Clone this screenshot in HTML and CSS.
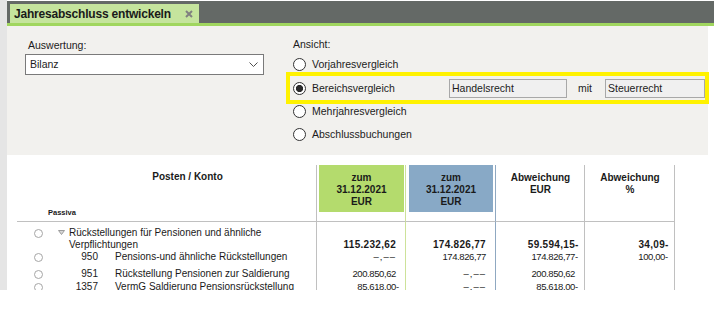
FILE: index.html
```html
<!DOCTYPE html>
<html lang="de">

<head>
    <meta charset="UTF-8">
    <meta name="viewport" content="width=device-width, initial-scale=1.0">
    <title>Jahresabschluss entwickeln</title>
<link rel="stylesheet" href="styles.css">
</head>

<body>
  <div class="window">
    <div class="sidebar"></div>
    <div class="main">

      <div class="tabbar">
        <div class="tab">
          <span>Jahresabschluss entwickeln</span>
          <svg class="tab-close" width="8" height="8" viewBox="0 0 8 8">
            <path d="M1 1L7 7M7 1L1 7" stroke="#808080" stroke-width="2" />
          </svg>
        </div>
      </div>

      <div class="settings">
        <div class="settings-left">
          <div class="field-label">Auswertung:</div>
          <div class="select">
            <span>Bilanz</span>
            <svg width="9" height="5" viewBox="0 0 9 5">
              <path d="M0.5 0.5L4.5 4.5L8.5 0.5" fill="none" stroke="#505050" stroke-width="1" />
            </svg>
          </div>
        </div>

        <div class="settings-right">
          <div class="field-label">Ansicht:</div>
          <div class="option"><span class="radio"></span>Vorjahresvergleich</div>
          <div class="option option-active">
            <span class="radio checked"></span>
            <span class="option-label">Bereichsvergleich</span>
            <span class="textbox">Handelsrecht</span>
            <span class="mit">mit</span>
            <span class="textbox textbox-short">Steuerrecht</span>
          </div>
          <div class="option"><span class="radio"></span>Mehrjahresvergleich</div>
          <div class="option"><span class="radio"></span>Abschlussbuchungen</div>
        </div>
      </div>

      <div class="report">
        <div class="grid">
          <!-- header -->
          <div class="head head-posten">
            <div class="head-title">Posten / Konto</div>
            <div class="head-side">Passiva</div>
          </div>
          <div class="head col-current"><div class="head-fill fill-green">zum<br>31.12.2021<br>EUR</div></div>
          <div class="head col-compare"><div class="head-fill fill-blue">zum<br>31.12.2021<br>EUR</div></div>
          <div class="head col-diff"><div class="head-fill">Abweichung<br>EUR</div></div>
          <div class="head col-pct"><div class="head-fill">Abweichung<br>%</div></div>

          <!-- group row -->
          <div class="cell posten is-group">
            <span class="row-radio"></span>
            <svg class="twisty" width="7" height="5" viewBox="0 0 7 5">
              <path d="M0.5 0.5H6.5L3.5 4.5Z" fill="#d6d6d6" stroke="#9c9c9c" stroke-width="1" />
            </svg>
            <span class="group-label">Rückstellungen für Pensionen und ähnliche Verpflichtungen</span>
          </div>
          <div class="cell num strong col-current is-group">115.232,62<span class="sign"></span></div>
          <div class="cell num strong col-compare is-group">174.826,77<span class="sign"></span></div>
          <div class="cell num strong col-diff is-group">59.594,15<span class="sign">-</span></div>
          <div class="cell num strong col-pct is-group">34,09<span class="sign">-</span></div>

          <!-- accounts -->
          <div class="cell posten">
            <span class="row-radio"></span>
            <span class="acct-num">950</span>
            <span class="acct-name">Pensions-und ähnliche Rückstellungen</span>
          </div>
          <div class="cell num col-current"><span class="empty">–,––</span><span class="sign"></span></div>
          <div class="cell num col-compare">174.826,77<span class="sign"></span></div>
          <div class="cell num col-diff">174.826,77<span class="sign">-</span></div>
          <div class="cell num col-pct">100,00<span class="sign">-</span></div>

          <div class="cell posten">
            <span class="row-radio"></span>
            <span class="acct-num">951</span>
            <span class="acct-name">Rückstellung Pensionen zur Saldierung</span>
          </div>
          <div class="cell num col-current">200.850,62<span class="sign"></span></div>
          <div class="cell num col-compare"><span class="empty">–,––</span><span class="sign"></span></div>
          <div class="cell num col-diff">200.850,62<span class="sign"></span></div>
          <div class="cell num col-pct"></div>

          <div class="cell posten">
            <span class="row-radio"></span>
            <span class="acct-num">1357</span>
            <span class="acct-name">VermG Saldierung Pensionsrückstellung</span>
          </div>
          <div class="cell num col-current">85.618,00<span class="sign">-</span></div>
          <div class="cell num col-compare"><span class="empty">–,––</span><span class="sign"></span></div>
          <div class="cell num col-diff">85.618,00<span class="sign">-</span></div>
          <div class="cell num col-pct"></div>
        </div>
      </div>

    </div>
  </div>
</body>

</html>
```

FILE: styles.css
```css
body {
  margin: 0;
  background: #fff;
}

.window {
  display: flex;
  width: 714px;
  height: 290px;
  overflow: hidden;
  font-family: "Liberation Sans", Arial, sans-serif;
  color: #1c1c1c;
}

.sidebar {
  width: 7px;
  flex: none;
  background: #e5e5e5;
}

.main {
  flex: 1;
  min-width: 0;
}

/* tab strip */
.tabbar {
  display: flex;
  align-items: flex-end;
  height: 22px;
  margin-top: 1px;
  padding-left: 3px;
  background: #646966;
  border-bottom: 3px solid #a0d65e;
}

.tab {
  display: flex;
  align-items: center;
  justify-content: space-between;
  width: 189px;
  height: 19px;
  box-sizing: border-box;
  padding: 0 6px 0 4px;
  background: #c5e49d;
  font-size: 12px;
  font-weight: bold;
  letter-spacing: -0.2px;
  color: #1a1a1a;
}

/* settings panel */
.settings {
  display: flex;
  height: 129px;
  margin-right: 6px;
  padding-left: 18px;
  box-sizing: border-box;
  background: #f2f1ee;
  font-size: 10.5px;
  line-height: 13px;
}

.settings-left {
  width: 239px;
  padding-top: 13px;
}

.settings-left .field-label {
  padding-left: 3px;
}

.field-label {
  margin-bottom: 2px;
}

.select {
  display: flex;
  align-items: center;
  justify-content: space-between;
  height: 21px;
  box-sizing: border-box;
  padding: 0 5px 0 4px;
  background: #fff;
  border: 1px solid #7a7a7a;
}

.settings-right {
  margin-left: 29px;
  padding-top: 12px;
}

.option {
  display: flex;
  align-items: center;
  height: 23px;
}

.option-active {
  width: 415px;
  height: 24px;
  box-sizing: border-box;
  margin-left: -3px;
  padding-left: 3px;
  outline: 4px solid #fff200;
}

.radio {
  flex: none;
  width: 13px;
  height: 13px;
  box-sizing: border-box;
  margin-right: 6px;
  border: 1px solid #333;
  border-radius: 50%;
  background: #fff;
}

.radio.checked {
  background: radial-gradient(circle, #2b2b2b 0 3.3px, #fff 3.9px);
}

.option-label {
  width: 137px;
}

.textbox {
  display: flex;
  align-items: center;
  width: 118px;
  height: 19px;
  box-sizing: border-box;
  padding: 0 3px 0 2px;
  background: #f0f0f0;
  border: 1px solid #a8a8a8;
}

.textbox-short {
  width: 100px;
}

.mit {
  width: 38px;
  box-sizing: border-box;
  padding-left: 11px;
}

/* report table */
.report {
  padding: 10px 0 0 10px;
  background: #fff;
}

.grid {
  display: grid;
  grid-template-columns: 299px 90px 90px 89px 90px;
  grid-template-rows: 57px 29px 17px 13px 13px;
  font-size: 10px;
  line-height: 12px;
  color: #1a1a1a;
}

.head {
  border-bottom: 1px solid #c0c0c0;
  font-weight: bold;
  text-align: center;
}

.head-posten {
  display: flex;
  flex-direction: column;
  justify-content: space-between;
  padding: 6px 0 4px 31px;
  text-align: left;
}

.head-title {
  padding-left: 11px;
  text-align: center;
}

.head-side {
  font-size: 7.5px;
  line-height: 9px;
}

.head-fill {
  height: 47px;
  box-sizing: border-box;
  margin: 0 1px 0 2px;
  padding-top: 7px;
}

.fill-green {
  background: #b4db6d;
}

.fill-blue {
  margin: 0 2px 0 3px;
  background: #88a9c6;
}

.col-current {
  border-left: 1px solid #c0c0c0;
  border-right: 1px solid #cde29a;
}

.col-compare {
  border-right: 1px solid #8fa8c1;
}

.col-diff,
.col-pct {
  border-right: 1px solid #c0c0c0;
}

.posten {
  display: flex;
  align-items: flex-start;
  padding-left: 17px;
}

.row-radio {
  flex: none;
  width: 9px;
  height: 9px;
  box-sizing: border-box;
  margin-top: 1.5px;
  border: 1px solid #a6a6a6;
  border-radius: 50%;
}

.twisty {
  flex: none;
  margin: 3px 0 0 15px;
}

.group-label {
  width: 230px;
  margin-left: 4px;
}

.acct-num {
  width: 55px;
  text-align: right;
}

.acct-name {
  margin-left: 17px;
  white-space: nowrap;
}

.num {
  padding-right: 5px;
  text-align: right;
  font-size: 9.5px;
  letter-spacing: -0.4px;
  white-space: nowrap;
}

.num.strong {
  font-size: 10px;
  font-weight: bold;
  letter-spacing: 0.3px;
}

.empty {
  letter-spacing: 1px;
}

.sign {
  display: inline-block;
  width: 4px;
  text-align: left;
}

.cell.is-group {
  padding-top: 5px;
}

.num.is-group {
  padding-top: 17px;
}
```
